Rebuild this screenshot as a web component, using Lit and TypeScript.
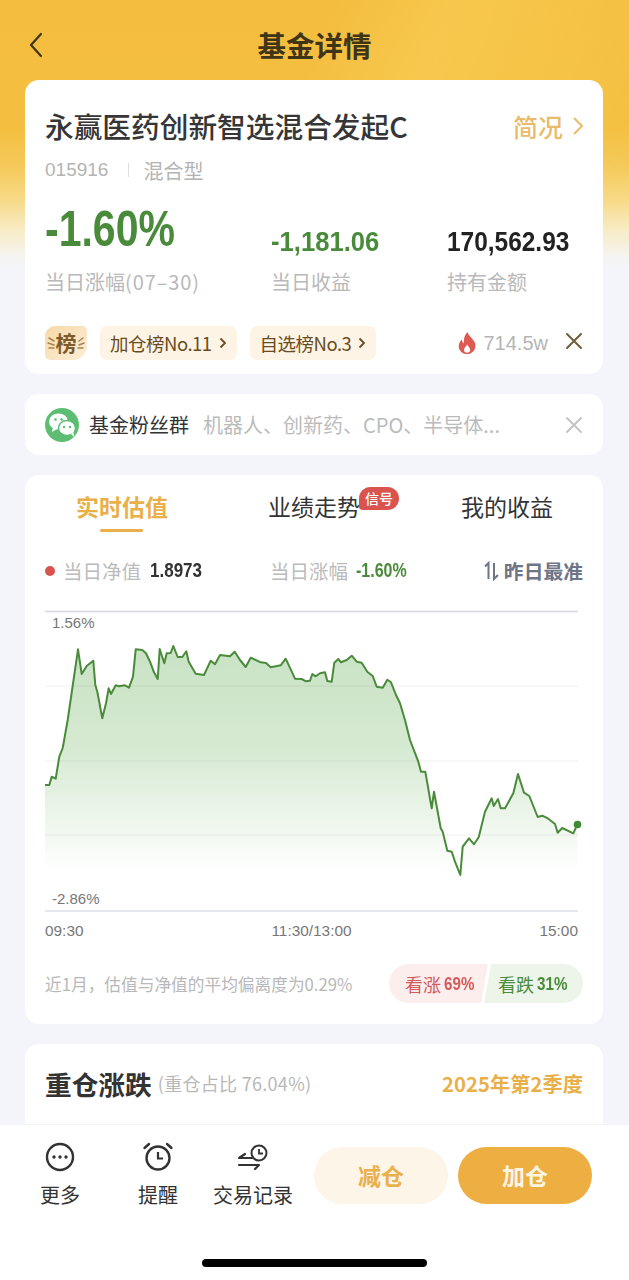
import { LitElement, html, css, svg } from "lit";
import { customElement } from "lit/decorators.js";

const LINE = [
  [45, 785], [49.3, 785], [51.7, 776.7], [55.7, 778.7], [59.3, 756.7], [62.7, 748], [67.7, 720], [78, 649.3], [81.7, 674], [86.7, 666],
  [93.3, 660.7], [95.3, 685], [97.3, 691.7], [102.3, 718.3], [106, 703.3], [108.7, 688.3], [111, 694], [115.7, 685.3], [119, 686.3], [125, 685.3],
  [129, 687.7], [133, 676.7], [135.7, 649.3], [142.3, 650], [146, 653.3], [150, 661.7], [154, 672.3], [157.7, 679], [159.7, 649], [164.3, 663.3],
  [166.7, 653.3], [170.7, 653], [173.3, 646], [177.7, 657], [182.3, 657], [186.3, 651.3], [188.7, 661.7], [195.7, 673.7], [204, 675], [210.7, 660.7],
  [215, 664.3], [220, 655], [230, 656.3], [234.7, 651.7], [240, 660], [245.7, 667], [250.7, 657.7], [260.7, 662.3], [266, 663], [270.7, 667.3],
  [280.7, 665.3], [285.7, 658.7], [295, 678.7], [301.7, 679], [306, 681.3], [310, 680.7], [312.3, 674], [315.7, 676.3], [320, 673.3], [325, 672.3],
  [327.3, 681], [331.7, 681.7], [334.3, 662.7], [338.3, 659], [341, 662.3], [346.7, 660], [351.7, 655.7], [356.7, 661.7], [361.7, 662.7], [367.3, 671.7],
  [372.7, 676], [376.7, 686.7], [382.7, 687.7], [387.3, 679.7], [391, 682.3], [396, 695], [400, 703.3], [405, 720], [410, 740], [418.3, 761.7],
  [421, 771.7], [425.3, 771.7], [431.7, 808.3], [434, 791.7], [440.7, 828.3], [442.7, 831.7], [447.3, 850.7], [451.7, 851.7], [455, 861.7], [460.3, 875],
  [462.7, 846.7], [469, 838.3], [474, 844.3], [478.7, 837.3], [485, 811.7], [491.7, 798.3], [493.7, 806], [498, 799], [500.7, 808.3], [505, 808.3],
  [513.3, 793.3], [518, 774], [524, 792.7], [529.3, 796], [537.7, 817], [542.3, 815.7], [548.3, 818.7], [555, 824], [557.7, 832.7], [562.3, 828],
  [573.3, 833.3], [577.3, 824.3],
];

const close = svg`<path d="M2 2L16 16M16 2L2 16" fill="none" stroke="currentColor" stroke-width="2" stroke-linecap="round"/>`;

@customElement("app-root")
export class AppRoot extends LitElement {
  static styles = css`
    :host {
      display: block;
      font-family: "Noto Sans CJK SC", "Noto Sans", sans-serif;
      color: #333;
    }
    .page {
      position: relative;
      height: 1280px;
      overflow: hidden;
      background: linear-gradient(180deg, #f4bd3f 0, #f4bf40 130px, #f5cb5e 170px, #f7da88 200px, #f8ecc6 230px, #f4f4f2 258px, #f4f5fb 272px);
    }
    .page::before {
      content: "";
      position: absolute;
      inset: 0 0 auto 0;
      height: 220px;
      background: linear-gradient(115deg, rgba(255, 255, 255, 0) 45%, rgba(255, 225, 110, 0.3) 62%, rgba(255, 255, 255, 0) 100%);
      -webkit-mask-image: linear-gradient(#000 60%, transparent);
      mask-image: linear-gradient(#000 60%, transparent);
    }
    .content {
      position: relative;
      display: flex;
      flex-direction: column;
    }
    .nav {
      height: 80px;
      padding: 10px 25px 0;
      display: grid;
      grid-template-columns: 40px 1fr 40px;
      align-items: center;
      box-sizing: border-box;
    }
    .nav svg { display: block; margin-left: 3px; }
    .nav h1 {
      margin: 0;
      text-align: center;
      font-size: 28.5px;
      line-height: 40px;
      font-weight: 700;
      color: #3f3416;
    }
    .card {
      margin: 0 25px;
      width: 578px;
      background: #fff;
      border-radius: 14px;
      box-sizing: border-box;
    }
    .fund { height: 294px; padding: 28px 20px 0; }
    .head { display: flex; justify-content: space-between; align-items: center; height: 36px; }
    .name { font-size: 28.7px; font-weight: 500; line-height: 36px; color: #363636; white-space: nowrap; }
    .brief { display: flex; align-items: center; gap: 9px; font-size: 25px; font-weight: 500; color: #e9bb6a; margin-right: -1px; }
    .meta { display: flex; align-items: center; margin-top: 12px; height: 28px; color: #b4b4b4; font-size: 20px; }
    .meta .code { font-family: "Liberation Sans", sans-serif; font-size: 19px; }
    .meta i { width: 1px; height: 14px; background: #dedede; margin: 0 14px 0 20px; }
    .stats { display: grid; grid-template-columns: 226px 176px 1fr; margin-top: 18px; }
    .stat { display: flex; flex-direction: column; }
    .val {
      height: 56px;
      display: flex;
      align-items: flex-end;
      font-family: "Liberation Sans", sans-serif;
      font-weight: 700;
      font-size: 28px;
      line-height: 1;
      color: #222;
    }
    .val span { display: block; white-space: nowrap; transform-origin: left center; margin-bottom: 2px; }
    .val .w1 { transform: scaleX(0.82); font-size: 50px; margin-bottom: 4px; }
    .val .w2 { transform: scaleX(0.915); }
    .val .w3 { transform: scaleX(0.873); }
    .green { color: #4a8b3b; }
    .lbl { margin-top: 11px; font-size: 20px; line-height: 26px; color: #b9b9b9; white-space: nowrap; }
    .lbl b { font-weight: 400; letter-spacing: 0.9px; }
    .tags { display: flex; align-items: center; margin-top: 31px; height: 34px; }
    .rank { width: 42px; height: 34px; display: block; margin-right: 13px; }
    .tag {
      display: flex;
      align-items: center;
      gap: 7px;
      height: 34px;
      padding: 0 10px;
      border-radius: 7px;
      background: #fdf4e6;
      color: #6b4c22;
      font-size: 18.5px;
      letter-spacing: -0.5px;
      margin-right: 13px;
      white-space: nowrap;
    }
    .heat { margin-left: auto; display: flex; align-items: center; gap: 8px; color: #b5b5b5; font-size: 20px; font-family: "Liberation Sans", sans-serif; }
    .x1 { color: #6f5f38; margin: 0 0 4px 17px; display: block; }
    .group {
      margin-top: 20px;
      height: 61px;
      padding: 0 20px;
      display: flex;
      align-items: center;
    }
    .group .t { margin-left: 10px; font-size: 20px; color: #333; }
    .group .d { margin-left: 14px; font-size: 20px; color: #bbb; white-space: nowrap; }
    .group .x2 { margin-left: auto; color: #c4c4c4; display: block; }
    .live { margin-top: 20px; height: 549px; padding: 0 20px; }
    .tabs {
      height: 66px;
      padding-bottom: 4px;
      box-sizing: border-box;
      display: grid;
      grid-template-columns: 154px 262px 122px;
      align-items: center;
      font-size: 23px;
      color: #333;
    }
    .tab { position: relative; white-space: nowrap; }
    .tab.on { color: #e9b04a; font-weight: 700; padding-left: 31px; }
    .tab.on::after {
      content: "";
      position: absolute;
      left: 55px;
      bottom: -9px;
      width: 43px;
      height: 3px;
      border-radius: 2px;
      background: #e9b04a;
    }
    .tab.mid { padding-left: 69px; }
    .badge {
      position: absolute;
      left: 160px;
      top: -2px;
      width: 40px;
      height: 23px;
      border-radius: 12px 12px 12px 4px;
      background: #d9534f;
      color: #fff;
      font-size: 14px;
      line-height: 22px;
      text-align: center;
      font-weight: 500;
    }
    .info { height: 60px; padding-bottom: 1px; box-sizing: border-box; display: flex; align-items: center; font-size: 19.5px; color: #bbb; white-space: nowrap; }
    .dot { width: 10px; height: 10px; border-radius: 50%; background: #d9534f; margin-right: 8px; }
    .num {
      display: inline-block;
      width: 52px;
      font-family: "Liberation Sans", sans-serif;
      font-weight: 700;
      font-size: 20px;
      margin-left: 9px;
      color: #333;
      transform-origin: left center;
      transform: scaleX(0.85);
    }
    .num.green { color: #4a8b3b; margin-left: 8px; transform: scaleX(0.8); }
    .cell2 { margin-left: 68px; }
    .best { margin-left: auto; display: flex; align-items: center; gap: 5px; font-weight: 700; font-size: 19.8px; color: #6f7486; }
    .chart { position: relative; height: 315px; width: 538px; }
    .chart svg { display: block; }
    .yl { position: absolute; left: 7px; font: 15px/18px "Liberation Sans", sans-serif; color: #777; }
    .yl.top { top: 13px; }
    .yl.low { top: 289px; }
    .axis { height: 30px; display: flex; justify-content: space-between; align-items: center; font: 15.4px/18px "Liberation Sans", sans-serif; color: #777; width: 533px; }
    .note { margin-top: 18px; height: 39px; display: flex; align-items: center; justify-content: space-between; }
    .note p { margin: 0; font-size: 16.7px; color: #b8b8b8; white-space: nowrap; }
    .vote { display: flex; width: 194px; height: 39px; font-size: 18px; white-space: nowrap; }
    .vote span { display: flex; align-items: center; }
    .vote b {
      font-family: "Liberation Sans", sans-serif;
      font-size: 19px;
      margin-left: 3px;
      transform-origin: left center;
      transform: scaleX(0.8);
    }
    .up {
      width: 99px;
      padding-left: 16px;
      box-sizing: border-box;
      color: #d25c5c;
      background: #fdeeee;
      border-radius: 20px 0 0 20px;
      clip-path: polygon(0 0, 100% 0, calc(100% - 7px) 100%, 0 100%);
    }
    .down {
      flex: 1;
      margin-left: -4px;
      padding-left: 14px;
      color: #4a8b3b;
      background: #edf5ea;
      border-radius: 0 20px 20px 0;
      clip-path: polygon(7px 0, 100% 0, 100% 100%, 0 100%);
    }
    .hold { margin-top: 20px; height: 120px; padding: 19px 20px 0 20px; }
    .hold .row { display: flex; align-items: center; height: 40px; }
    .hold h2 { margin: 0; font-size: 26.7px; font-weight: 700; color: #333; }
    .hold small { margin-left: 6px; font-size: 18px; letter-spacing: 0.3px; color: #b8b8b8; white-space: nowrap; }
    .hold em { margin-left: auto; font-style: normal; font-weight: 700; font-size: 20.3px; color: #e9b04a; }
    .foot {
      position: absolute;
      left: 0;
      right: 0;
      bottom: 0;
      height: 155px;
      background: #fff;
      box-shadow: 0 -1px 0 #f2f2f4;
      box-sizing: border-box;
      padding: 15px 37px 0 0;
      display: flex;
      align-items: flex-start;
    }
    .act { position: absolute; top: 16px; width: 90px; display: flex; flex-direction: column; align-items: center; font-size: 20px; color: #333; }
    .act span { line-height: 28px; margin-top: 8px; }
    .act svg { display: block; }
    .a1 { left: 15px; }
    .a2 { left: 113px; }
    .a3 { left: 208px; }
    .btns { margin-left: auto; display: flex; gap: 10px; margin-top: 7px; }
    .btn { width: 134px; height: 57px; padding-bottom: 2px; box-sizing: border-box; border-radius: 29px; display: flex; align-items: center; justify-content: center; font-size: 23px; font-weight: 700; }
    .btn.sub { background: #fcf5e8; color: #eab04c; }
    .btn.add { background: #edaf42; color: #fdf5e3; }
    .home { position: absolute; left: 202px; bottom: 13px; width: 225px; height: 8px; border-radius: 4px; background: #000; }
  `;

  render() {
    const line = LINE.map((p) => p.join(",")).join(" ");
    const last = LINE[LINE.length - 1];
    const area = `45,870 ${line} ${last[0]},870`;
    return html`
      <div class="page">
        <div class="content">
          <div class="nav">
            <svg width="16" height="26" viewBox="0 0 16 26"><path d="M13 2L3 13L13 24" fill="none" stroke="#3f3416" stroke-width="2.2" stroke-linecap="round" stroke-linejoin="round"/></svg>
            <h1>基金详情</h1>
            <span></span>
          </div>

          <div class="card fund">
            <div class="head">
              <div class="name">永赢医药创新智选混合发起C</div>
              <div class="brief">简况
                <svg width="12" height="20" viewBox="0 0 12 20"><path d="M2 2L10 10L2 18" fill="none" stroke="#e9bb6a" stroke-width="2"/></svg>
              </div>
            </div>
            <div class="meta"><span class="code">015916</span><i></i><span>混合型</span></div>
            <div class="stats">
              <div class="stat"><div class="val green"><span class="w1">-1.60%</span></div><div class="lbl">当日涨幅<b>(07–30)</b></div></div>
              <div class="stat"><div class="val green"><span class="w2">-1,181.06</span></div><div class="lbl">当日收益</div></div>
              <div class="stat"><div class="val"><span class="w3">170,562.93</span></div><div class="lbl">持有金额</div></div>
            </div>
            <div class="tags">
              <svg class="rank" viewBox="0 0 42 34">
                <defs><linearGradient id="rk" x1="0" y1="0" x2="1" y2="1"><stop offset="0" stop-color="#f8d8a8"/><stop offset="1" stop-color="#fcefd8"/></linearGradient></defs>
                <path d="M10 0H37a5 5 0 0 1 5 5V20A14 14 0 0 1 28 34H5a5 5 0 0 1-5-5V10A10 10 0 0 1 10 0Z" fill="url(#rk)"/>
                <text x="21" y="25" text-anchor="middle" font-size="21" font-weight="700" fill="#7d5a2c">榜</text>
                <path d="M4 12l5 3M3 17l6 2M4 22l5 0M38 12l-4 3M39 17l-5 2M38 22l-5 0" stroke="#a5824f" stroke-width="1.5" stroke-linecap="round"/>
              </svg>
              <div class="tag">加仓榜No.11
                <svg width="8" height="12" viewBox="0 0 8 12"><path d="M1.5 1.5L6 6L1.5 10.5" fill="none" stroke="#6b4c22" stroke-width="1.8"/></svg>
              </div>
              <div class="tag">自选榜No.3
                <svg width="8" height="12" viewBox="0 0 8 12"><path d="M1.5 1.5L6 6L1.5 10.5" fill="none" stroke="#6b4c22" stroke-width="1.8"/></svg>
              </div>
              <div class="heat">
                <svg width="18" height="22" viewBox="0 0 18 22"><path d="M9.5 0C10.5 4 15 6.5 16.8 10.5C19 15.5 15.5 22 9 22C3 22 -0.8 16.5 1.3 11.2C2 9.5 3 8.5 3.8 7.5C4 9.5 4.8 10.8 6 11.2C5.5 7 6.5 3 9.5 0ZM9.2 12.5C8.5 14.5 6 15.5 6 18C6 19.8 7.4 20.8 9 20.8C10.8 20.8 12.2 19.6 12.2 17.8C12.2 15.8 10.2 14.5 9.2 12.5Z" fill="#df5a52" fill-rule="evenodd"/></svg>
                714.5w
              </div>
              <svg class="x1" width="18" height="18" viewBox="0 0 18 18">${close}</svg>
            </div>
          </div>

          <div class="card group">
            <svg width="34" height="34" viewBox="0 0 34 34">
              <circle cx="17" cy="17" r="17" fill="#5dbd72"/>
              <ellipse cx="13.5" cy="13.5" rx="9.5" ry="8" fill="#fff"/>
              <path d="M8 19l-1 5l5-3z" fill="#fff"/>
              <ellipse cx="22" cy="20" rx="8.5" ry="7.5" fill="#fff" stroke="#5dbd72" stroke-width="1.4"/>
              <path d="M26 26l3 3l-.5-5z" fill="#fff"/>
              <circle cx="10.5" cy="11.5" r="1.3" fill="#5dbd72"/><circle cx="16.5" cy="11.5" r="1.3" fill="#5dbd72"/>
              <circle cx="19" cy="19" r="1.2" fill="#5dbd72"/><circle cx="25" cy="19" r="1.2" fill="#5dbd72"/>
            </svg>
            <span class="t">基金粉丝群</span>
            <span class="d">机器人、创新药、CPO、半导体...</span>
            <svg class="x2" width="18" height="18" viewBox="0 0 18 18">${close}</svg>
          </div>

          <div class="card live">
            <div class="tabs">
              <div class="tab on">实时估值</div>
              <div class="tab mid">业绩走势<span class="badge">信号</span></div>
              <div class="tab">我的收益</div>
            </div>
            <div class="info">
              <i class="dot"></i>当日净值<span class="num">1.8973</span>
              <span class="cell2">当日涨幅</span><span class="num green">-1.60%</span>
              <span class="best">
                <svg width="15" height="20" viewBox="0 0 15 20"><path d="M4.5 18V2L1 5.5M10 2V18L14 14" fill="none" stroke="#6f7486" stroke-width="2"/></svg>
                昨日最准
              </span>
            </div>
            <div class="chart">
              <svg width="538" height="315" viewBox="45 601 538 315">
                <defs>
                  <linearGradient id="fill" gradientUnits="userSpaceOnUse" x1="0" y1="650" x2="0" y2="872">
                    <stop offset="0" stop-color="#c9e2c4"/>
                    <stop offset="0.45" stop-color="#d6ead2"/>
                    <stop offset="1" stop-color="#ffffff"/>
                  </linearGradient>
                </defs>
                <line x1="45" x2="578" y1="611.5" y2="611.5" stroke="#d5d7e2" stroke-width="1.4"/>
                <polygon points=${area} fill="url(#fill)"/>
                <g stroke="#000" stroke-opacity="0.06" stroke-width="1">
                  <line x1="45" x2="578" y1="686" y2="686"/>
                  <line x1="45" x2="578" y1="761" y2="761"/>
                  <line x1="45" x2="578" y1="835" y2="835"/>
                </g>
                <line x1="45" x2="578" y1="911" y2="911" stroke="#dfe0ea" stroke-width="1.4"/>
                <polyline points=${line} fill="none" stroke="#4a8b3b" stroke-width="2" stroke-linejoin="round"/>
                <circle cx="577.5" cy="824.5" r="3.8" fill="#3f8a36"/>
              </svg>
              <span class="yl top">1.56%</span>
              <span class="yl low">-2.86%</span>
            </div>
            <div class="axis"><span>09:30</span><span>11:30/13:00</span><span>15:00</span></div>
            <div class="note">
              <p>近1月，估值与净值的平均偏离度为0.29%</p>
              <div class="vote">
                <span class="up">看涨<b>69%</b></span>
                <span class="down">看跌<b>31%</b></span>
              </div>
            </div>
          </div>

          <div class="card hold">
            <div class="row">
              <h2>重仓涨跌</h2>
              <small>(重仓占比 76.04%)</small>
              <em>2025年第2季度</em>
            </div>
          </div>
        </div>

        <div class="foot">
          <div class="act a1">
            <svg width="32" height="32" viewBox="0 0 32 32"><circle cx="16" cy="16" r="13" fill="none" stroke="#333" stroke-width="2.4"/><circle cx="10" cy="16" r="1.7" fill="#333"/><circle cx="16" cy="16" r="1.7" fill="#333"/><circle cx="22" cy="16" r="1.7" fill="#333"/></svg>
            <span>更多</span>
          </div>
          <div class="act a2">
            <svg width="32" height="32" viewBox="0 0 32 32"><circle cx="16" cy="17" r="11.5" fill="none" stroke="#333" stroke-width="2.4"/><path d="M16 11V17.5H21" fill="none" stroke="#333" stroke-width="2.2"/><path d="M2.5 7L7 3M29.5 7L25 3" stroke="#333" stroke-width="2.4" stroke-linecap="round"/></svg>
            <span>提醒</span>
          </div>
          <div class="act a3">
            <svg width="32" height="32" viewBox="0 0 32 32"><circle cx="22" cy="12" r="7.5" fill="none" stroke="#333" stroke-width="2"/><path d="M22 8V12.5H26" fill="none" stroke="#333" stroke-width="1.8"/><path d="M15 17H2L8 13M2 24H22L18 28" fill="none" stroke="#333" stroke-width="2.2" stroke-linecap="round" stroke-linejoin="round"/></svg>
            <span>交易记录</span>
          </div>
          <div class="btns">
            <div class="btn sub">减仓</div>
            <div class="btn add">加仓</div>
          </div>
          <div class="home"></div>
        </div>
      </div>
    `;
  }
}
